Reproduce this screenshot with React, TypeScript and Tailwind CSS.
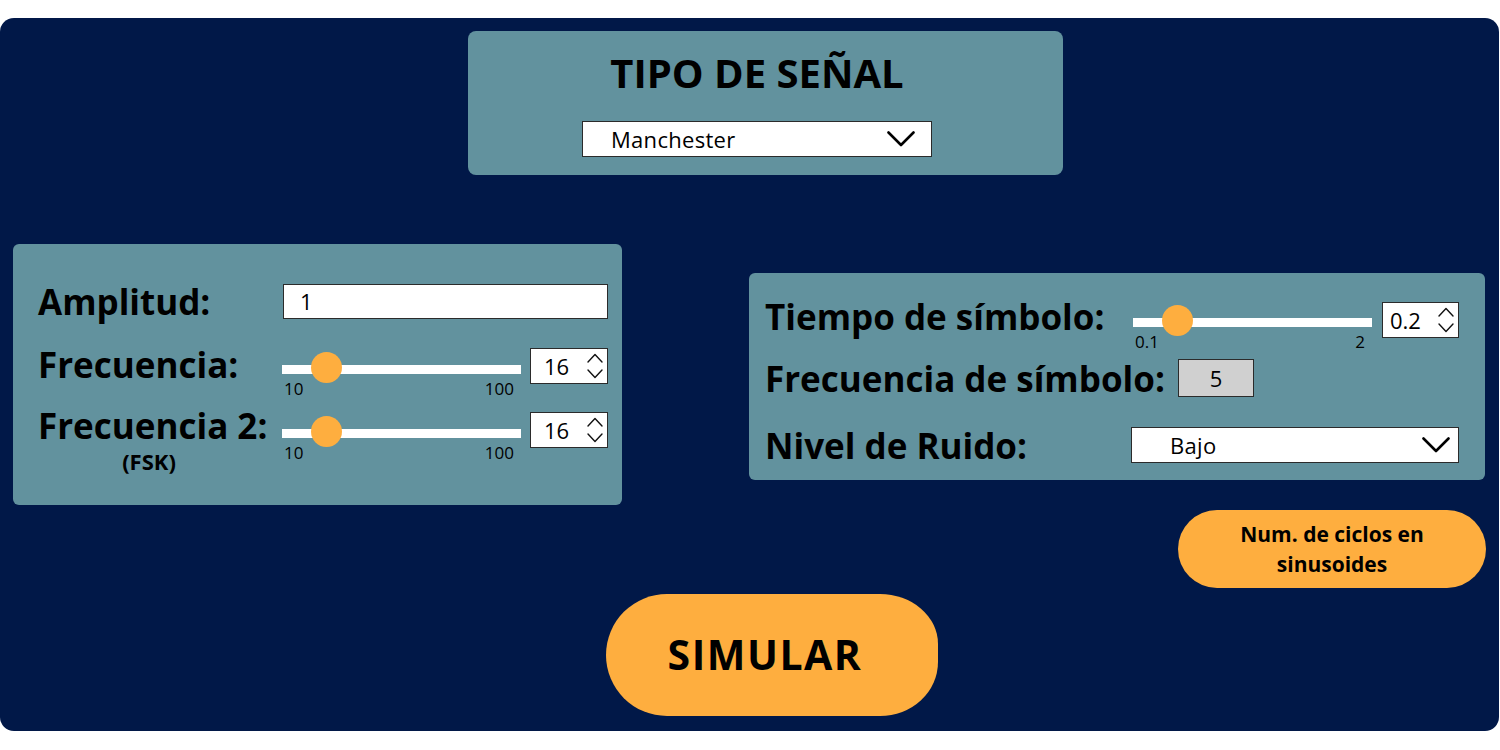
import React from 'react'

// palette from the mockup
const NAVY = 'bg-[#011848]'
const TEAL = 'bg-[#62929e]'

function Chevron() {
  return (
    <svg width="28" height="16" viewBox="0 0 28 16" fill="none">
      <polyline points="1.5,1.5 14,14 26.5,1.5" stroke="#000" strokeWidth="2.6" strokeLinecap="round" strokeLinejoin="round" />
    </svg>
  )
}

function Spinner() {
  return (
    <svg width="16" height="26" viewBox="0 0 16 26" fill="none">
      <polyline points="1,9 8,1.5 15,9" stroke="#111" strokeWidth="1.4" strokeLinecap="round" strokeLinejoin="round" />
      <polyline points="1,17 8,24.5 15,17" stroke="#111" strokeWidth="1.4" strokeLinecap="round" strokeLinejoin="round" />
    </svg>
  )
}

function Select({ value, w, pl, pr }: { value: string; w: string; pl: string; pr: string }) {
  return (
    <div className={`${w} h-[36px] bg-white border border-[#2b2b2b] flex items-center justify-between ${pl} ${pr}`}>
      <span className="text-[22px] leading-none tracking-[0.3px] text-black">{value}</span>
      <Chevron />
    </div>
  )
}

function NumBox({ value, w, pl }: { value: string; w: string; pl: string }) {
  return (
    <div className={`${w} h-[36px] bg-white border border-[#2b2b2b] flex items-center justify-between ${pl} pr-[4px]`}>
      <span className="text-[22px] leading-none text-black">{value}</span>
      <Spinner />
    </div>
  )
}

interface SliderProps {
  min: string
  max: string
  thumb: number // thumb centre, px from track start
}

function Slider({ min, max, thumb }: SliderProps) {
  return (
    <div className="w-[239px] pt-[17px]">
      <div className="relative h-[9px] bg-white">
        <div
          className="absolute top-[-13px] w-[31px] h-[31px] rounded-full bg-[#feae3f]"
          style={{ left: thumb - 15.5 }}
        />
      </div>
      <div className="flex justify-between mt-[6px] text-[17px] leading-[17px] text-black">
        <span className="ml-[2px]">{min}</span>
        <span className="mr-[7px]">{max}</span>
      </div>
    </div>
  )
}

const LABEL = 'text-[35px] font-bold text-black leading-none'

export default function App() {
  return (
    <div className="w-[1500px] h-[750px] bg-white pt-[18px] font-['Open_Sans',sans-serif]">
      <div className={`w-[1499px] h-[713px] rounded-[14px] ${NAVY} pt-[13px]`}>
        {/* Tipo de señal */}
        <div className={`ml-[468px] w-[595px] h-[144px] rounded-[8px] ${TEAL} flex flex-col items-center pt-[18px] pr-[17px]`}>
          <h1 className="text-[40px] leading-[48px] font-bold text-black">TIPO DE SEÑAL</h1>
          <div className="mt-[24px]">
            <Select value="Manchester" w="w-[350px]" pl="pl-[28px]" pr="pr-[16px]" />
          </div>
        </div>

        <div className="flex items-start">
          {/* Amplitud / frecuencias */}
          <div className={`ml-[13px] mt-[69px] w-[609px] h-[261px] rounded-[6px] ${TEAL} pl-[25px] pt-[40px]`}>
            <div className="flex items-center h-[35px]">
              <div className={`w-[245px] ${LABEL}`}>Amplitud:</div>
              <div className="w-[325px] h-[35px] bg-white border border-[#2b2b2b] flex items-center pl-[16px] text-[22px] text-black">1</div>
            </div>

            <div className="flex items-start h-[36px] mt-[29px]">
              <div className={`w-[244px] h-[32px] flex items-center ${LABEL}`}>Frecuencia:</div>
              <Slider min="10" max="100" thumb={44} />
              <div className="ml-[9px]">
                <NumBox value="16" w="w-[78px]" pl="pl-[13px]" />
              </div>
            </div>

            <div className="flex items-start h-[36px] mt-[28px]">
              <div className={`w-[244px] h-[27px] flex items-center ${LABEL}`}>Frecuencia 2:</div>
              <Slider min="10" max="100" thumb={44} />
              <div className="ml-[9px]">
                <NumBox value="16" w="w-[78px]" pl="pl-[13px]" />
              </div>
            </div>
            <div className="w-[222px] text-center text-[22px] font-bold leading-[26px] text-black">(FSK)</div>
          </div>

          <div className="ml-[127px] mt-[98px] flex flex-col">
            {/* Símbolo / ruido */}
            <div className={`w-[736px] rounded-[6px] ${TEAL} pl-[16px] pt-[29px] pb-[17px]`}>
              <div className="flex items-start h-[35px]">
                <div className={`w-[368px] h-[29px] flex items-center ${LABEL}`}>Tiempo de símbolo:</div>
                <div className="mt-[-1px]">
                  <Slider min="0.1" max="2" thumb={44} />
                </div>
                <div className="ml-[10px]">
                  <NumBox value="0.2" w="w-[77px]" pl="pl-[7px]" />
                </div>
              </div>

              <div className="flex items-center mt-[22px]">
                <div className={`w-[413px] ${LABEL}`}>Frecuencia de símbolo:</div>
                <div className="w-[76px] h-[38px] bg-[#d0d0d0] border border-[#2b2b2b] flex items-center justify-center text-[22px] text-black">5</div>
              </div>

              <div className="flex items-center mt-[30px]">
                <div className={`w-[366px] ${LABEL}`}>Nivel de Ruido:</div>
                <Select value="Bajo" w="w-[328px]" pl="pl-[38px]" pr="pr-[8px]" />
              </div>
            </div>

            <button className="ml-[429px] mt-[30px] w-[308px] h-[78px] rounded-full bg-[#feae3f] text-[21px] font-bold leading-[30px] text-black">
              Num. de ciclos en<br />sinusoides
            </button>
          </div>
        </div>

        <button className="ml-[606px] mt-[6px] w-[332px] h-[122px] pr-[14px] rounded-l-[61px] rounded-tr-[58px_50px] rounded-br-[58px_54px] bg-[#feae3f] text-[41px] font-bold text-black tracking-[1.5px]">
          SIMULAR
        </button>
      </div>
    </div>
  )
}
